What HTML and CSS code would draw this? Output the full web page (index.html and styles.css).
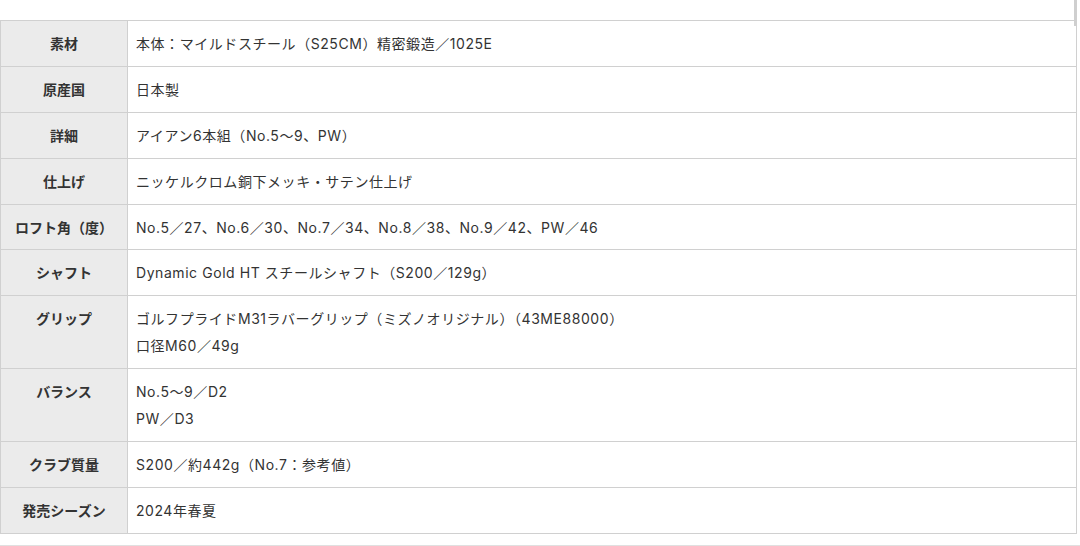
FILE: index.html
```html
<!DOCTYPE html>
<html lang="ja">
<head>
<meta charset="utf-8">
<link rel="stylesheet" href="styles.css">
</head>
<body>
<div class="scroll-thumb"></div>
<table class="spec">
  <tr><th>素材</th><td>本体：マイルドスチール（S25CM）精密鍛造／1025E</td></tr>
  <tr><th>原産国</th><td>日本製</td></tr>
  <tr><th>詳細</th><td>アイアン6本組（No.5～9、PW）</td></tr>
  <tr><th>仕上げ</th><td>ニッケルクロム銅下メッキ・サテン仕上げ</td></tr>
  <tr><th>ロフト角（度）</th><td>No.5／27、No.6／30、No.7／34、No.8／38、No.9／42、PW／46</td></tr>
  <tr><th>シャフト</th><td>Dynamic Gold HT スチールシャフト（S200／129g）</td></tr>
  <tr><th>グリップ</th><td>ゴルフプライドM31ラバーグリップ（ミズノオリジナル）（43ME88000）<br>口径M60／49g</td></tr>
  <tr><th>バランス</th><td>No.5～9／D2<br>PW／D3</td></tr>
  <tr><th>クラブ質量</th><td>S200／約442g（No.7：参考値）</td></tr>
  <tr><th>発売シーズン</th><td>2024年春夏</td></tr>
</table>
<div class="rule"></div>
</body>
</html>
```
FILE: styles.css
```css
html, body {
  margin: 0;
  padding: 0;
  background: #ffffff;
}
body {
  padding-top: 20px;
  font-family: "Noto Sans", "Noto Sans CJK JP", sans-serif;
  color: #333333;
  position: relative;
}
.scroll-thumb {
  position: absolute;
  top: 0;
  left: 1074px;
  width: 3px;
  height: 26px;
  background: #cfcfcf;
}
.spec {
  width: 1077px;
  border-collapse: collapse;
  border: 1px solid #d0d0d0;
  font-size: 14px;
  line-height: 27px;
}
.spec th,
.spec td {
  border: 1px solid #d0d0d0;
  padding: 9px 8px 8.9px 8px;
  vertical-align: top;
}
.spec th {
  width: 110px;
  background: #ebebeb;
  font-weight: bold;
  text-align: center;
  font-size: 14px;
  letter-spacing: 0;
}
.spec td {
  text-align: left;
  font-family: "Inter", "Noto Sans CJK JP", sans-serif;
  letter-spacing: 0.04em;
  word-spacing: 0;
}
.rule {
  margin-top: 11px;
  border-top: 1px solid #e0e0e0;
}
```
